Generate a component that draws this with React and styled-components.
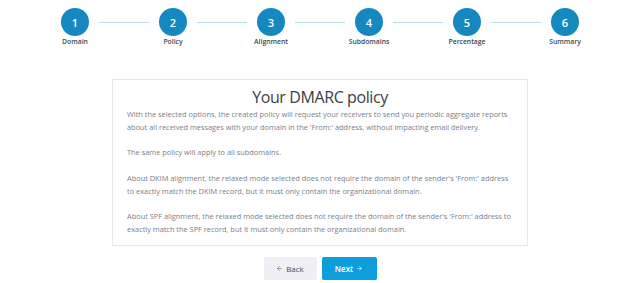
import React from "react";
import styled, { createGlobalStyle } from "styled-components";
import { ArrowLeft, ArrowRight } from "lucide-react";

const Global = createGlobalStyle`
  html, body { margin: 0; padding: 0; background: #ffffff; }
  body { font-family: "Open Sans", "Noto Sans", sans-serif; }
  * { box-sizing: border-box; }
`;

const Page = styled.div`
  width: 640px;
  height: 283px;
  padding-top: 8px;
  display: flex;
  flex-direction: column;
  align-items: center;
`;

const Stepper = styled.div`
  display: flex;
  align-items: flex-start;
  justify-content: center;
`;

const Step = styled.div`
  width: 28px;
  display: flex;
  flex-direction: column;
  align-items: center;
`;

const Circle = styled.div`
  width: 28px;
  height: 28px;
  border-radius: 50%;
  background: #1589bf;
  color: #ffffff;
  display: flex;
  align-items: center;
  justify-content: center;
  font-size: 11px;
  font-weight: 600;
`;

const StepLabel = styled.div`
  margin-top: 0;
  font-size: 6.8px;
  font-weight: 600;
  color: #424852;
  white-space: nowrap;
  line-height: 12px;
`;

const Connector = styled.div`
  width: 50px;
  height: 1px;
  margin: 14px 10px 0;
  background: #b9dcea;
`;

const Card = styled.div`
  margin-top: 31px;
  width: 416px;
  border: 1px solid #e4e7eb;
  padding: 6px 14px 9px;
  color: #7a808a;
`;

const Title = styled.h1`
  margin: 0;
  text-align: center;
  font-size: 16px;
  letter-spacing: -0.4px;
  font-weight: 400;
  line-height: 22px;
  color: #3c4047;
`;

const Para = styled.p`
  margin: 0 0 12.75px;
  font-size: 7.4px;
  line-height: 12.75px;
  &:last-child { margin-bottom: 0; }
`;

const Actions = styled.div`
  margin-top: 11px;
  display: flex;
  gap: 5px;
`;

const Button = styled.button`
  height: 23px;
  width: ${(p) => (p.$primary ? "55px" : "53px")};
  border: none;
  border-radius: 2px;
  font-family: inherit;
  font-size: 8px;
  font-weight: ${(p) => (p.$primary ? 600 : 400)};
  background: ${(p) => (p.$primary ? "#0d9ddb" : "#eef0f4")};
  color: ${(p) => (p.$primary ? "#ffffff" : "#4a4f57")};
  display: flex;
  align-items: center;
  justify-content: center;
  gap: 3px;
  padding: 0;
`;

const steps = ["Domain", "Policy", "Alignment", "Subdomains", "Percentage", "Summary"];

export default function App() {
  return (
    <>
      <Global />
      <Page>
        <Stepper>
          {steps.map((s, i) => (
            <React.Fragment key={s}>
              {i > 0 && <Connector />}
              <Step>
                <Circle>{i + 1}</Circle>
                <StepLabel>{s}</StepLabel>
              </Step>
            </React.Fragment>
          ))}
        </Stepper>
        <Card>
          <Title>Your DMARC policy</Title>
          <Para>
            With the selected options, the created policy will request your receivers to send you periodic aggregate reports about all received messages with your domain in the 'From:' address, without impacting email delivery.
          </Para>
          <Para>The same policy will apply to all subdomains.</Para>
          <Para>
            About DKIM alignment, the relaxed mode selected does not require the domain of the sender's 'From:' address to exactly match the DKIM record, but it must only contain the organizational domain.
          </Para>
          <Para>
            About SPF alignment, the relaxed mode selected does not require the domain of the sender's 'From:' address to exactly match the SPF record, but it must only contain the organizational domain.
          </Para>
        </Card>
        <Actions>
          <Button><ArrowLeft size={7} strokeWidth={1.6} />Back</Button>
          <Button $primary>Next<ArrowRight size={7} strokeWidth={2} /></Button>
        </Actions>
      </Page>
    </>
  );
}
